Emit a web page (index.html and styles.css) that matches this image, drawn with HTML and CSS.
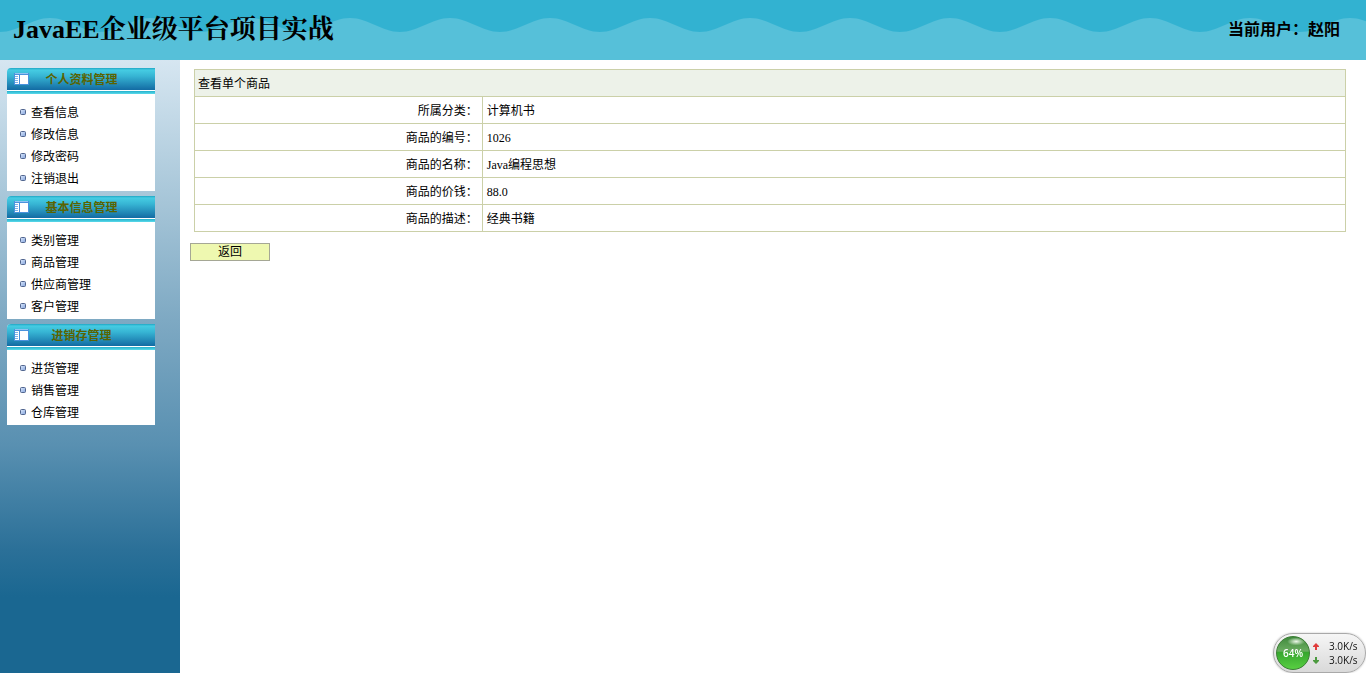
FILE: index.html
```html
<!DOCTYPE html>
<html lang="zh-CN">
<head>
<meta charset="utf-8">
<title>JavaEE企业级平台项目实战</title>
<link rel="stylesheet" href="styles.css">
</head>
<body>
<svg class="defs" width="0" height="0" aria-hidden="true">
  <defs>
    <linearGradient id="bullet-fill" x1="0" y1="0" x2="1" y2="1">
      <stop offset="0" stop-color="#dbe8fb"/><stop offset="1" stop-color="#86a5dd"/>
    </linearGradient>
    <symbol id="panel-icon" viewBox="0 0 15 12">
      <path fill="#4a92dc" d="M0 0h15v12H0z"/>
      <path fill="#fff" d="M1 2h4v9H1zM6 2h8v9H6z"/>
      <path fill="#7fb2e8" d="M1 3h3v1H1zM1 5h3v1H1zM1 7h3v1H1zM1 9h3v1H1z"/>
      <path fill="#8fc3f2" d="M1 0h13v1H1z"/>
    </symbol>
    <symbol id="bullet" viewBox="0 0 6 6">
      <rect x="0.5" y="0.5" width="5" height="5" rx="1" fill="url(#bullet-fill)" stroke="#52668f"/>
    </symbol>
  </defs>
</svg>
<header class="header">
  <svg class="wave" aria-hidden="true">
    <defs>
      <pattern id="wave-pattern" x="50" width="100" height="60" patternUnits="userSpaceOnUse">
        <path fill="#56c0d9" d="M0 18C18 18 32 32 50 32S82 18 100 18V60H0z"/>
      </pattern>
    </defs>
    <rect width="100%" height="100%" fill="url(#wave-pattern)"/>
  </svg>
  <h1 class="title">JavaEE企业级平台项目实战</h1>
  <p class="user">当前用户：赵阳</p>
</header>
<div class="body">
  <nav class="sidebar">
    <section class="panel">
      <h2 class="panel-head"><svg class="panel-icon"><use href="#panel-icon"/></svg><span class="panel-title">个人资料管理</span></h2>
      <ul class="menu">
        <li><svg class="bullet"><use href="#bullet"/></svg><a href="#">查看信息</a></li>
        <li><svg class="bullet"><use href="#bullet"/></svg><a href="#">修改信息</a></li>
        <li><svg class="bullet"><use href="#bullet"/></svg><a href="#">修改密码</a></li>
        <li><svg class="bullet"><use href="#bullet"/></svg><a href="#">注销退出</a></li>
      </ul>
    </section>
    <section class="panel">
      <h2 class="panel-head"><svg class="panel-icon"><use href="#panel-icon"/></svg><span class="panel-title">基本信息管理</span></h2>
      <ul class="menu">
        <li><svg class="bullet"><use href="#bullet"/></svg><a href="#">类别管理</a></li>
        <li><svg class="bullet"><use href="#bullet"/></svg><a href="#">商品管理</a></li>
        <li><svg class="bullet"><use href="#bullet"/></svg><a href="#">供应商管理</a></li>
        <li><svg class="bullet"><use href="#bullet"/></svg><a href="#">客户管理</a></li>
      </ul>
    </section>
    <section class="panel">
      <h2 class="panel-head"><svg class="panel-icon"><use href="#panel-icon"/></svg><span class="panel-title">进销存管理</span></h2>
      <ul class="menu">
        <li><svg class="bullet"><use href="#bullet"/></svg><a href="#">进货管理</a></li>
        <li><svg class="bullet"><use href="#bullet"/></svg><a href="#">销售管理</a></li>
        <li><svg class="bullet"><use href="#bullet"/></svg><a href="#">仓库管理</a></li>
      </ul>
    </section>
  </nav>
  <main class="content">
    <table class="detail">
      <colgroup><col class="label-col"><col></colgroup>
      <thead><tr><th class="caption" colspan="2">查看单个商品</th></tr></thead>
      <tbody>
        <tr><th scope="row">所属分类：</th><td>计算机书</td></tr>
        <tr><th scope="row">商品的编号：</th><td>1026</td></tr>
        <tr><th scope="row">商品的名称：</th><td>Java编程思想</td></tr>
        <tr><th scope="row">商品的价钱：</th><td>88.0</td></tr>
        <tr><th scope="row">商品的描述：</th><td>经典书籍</td></tr>
      </tbody>
    </table>
    <button class="back" type="button">返回</button>
  </main>
</div>
<aside class="meter">
  <span class="ball">64%</span>
  <div class="rates">
    <span class="rate"><svg class="arrow up" viewBox="0 0 6 7"><path d="M3 0l3 3v1H4v3H2V4H0V3z"/></svg>3.0K/s</span>
    <span class="rate"><svg class="arrow down" viewBox="0 0 6 7"><path d="M3 7L0 4V3h2V0h2v3h2v1z"/></svg>3.0K/s</span>
  </div>
</aside>
</body>
</html>
```
FILE: styles.css
```css
* {
  box-sizing: border-box;
}

body {
  margin: 0;
  min-height: 100vh;
  display: flex;
  flex-direction: column;
  background: #fff;
  color: #000;
  font: 12px/22px "Liberation Serif", "Noto Sans CJK SC", serif;
}

.defs {
  position: absolute;
}

.header {
  position: relative;
  display: flex;
  align-items: center;
  justify-content: space-between;
  height: 60px;
  padding: 0 26px 0 13px;
  background: #32b2d1;
}

.wave {
  position: absolute;
  inset: 0;
  width: 100%;
  height: 100%;
}

.title,
.user {
  position: relative;
  margin: 0;
  font-weight: bold;
  white-space: nowrap;
}

.title {
  font-family: "Liberation Serif", "Noto Serif CJK SC", "Noto Sans CJK SC", serif;
  font-size: 26px;
  line-height: 60px;
}

.user {
  font-size: 16px;
  line-height: 60px;
}

.body {
  flex: 1;
  display: flex;
}

.sidebar {
  flex: none;
  display: flex;
  flex-direction: column;
  gap: 5px;
  width: 180px;
  padding: 8px 25px 8px 7px;
  background: #1a6791 linear-gradient(#d6e6f1 0, #aac8da 130px, #7ea9c3 260px, #5990b1 385px, #2b7098 490px, #1a6791 537px) no-repeat;
}

.panel {
  background: #fff;
  border-radius: 4px 0 0 0;
}

.panel-head {
  display: flex;
  align-items: flex-start;
  height: 26px;
  margin: 0;
  padding: 1px 7px 0;
  border-radius: 4px 0 0 0;
  background: linear-gradient(#1fa6c4 0, #45cce3 2px, #37b5d4 8px, #136ba3 22px, #fff 22px, #fff 23px, #22b0cc 23px, #5cdaea 26px);
  font-size: 12px;
  line-height: 22px;
}

.panel-icon {
  width: 15px;
  height: 12px;
  margin-top: 4px;
}

.panel-title {
  flex: 1;
  padding-right: 14px;
  color: #5a6300;
  text-align: center;
}

.menu {
  margin: 0;
  padding: 7px 13px 2px;
  list-style: none;
}

.menu li {
  display: flex;
  align-items: center;
  gap: 5px;
  height: 22px;
}

.menu a {
  padding-top: 2px;
  color: #000;
  text-decoration: none;
}

.bullet {
  width: 6px;
  height: 6px;
}

.content {
  flex: 1;
  padding: 9px 20px 9px 10px;
}

.detail {
  width: calc(100% - 4px);
  margin: 0 0 11px 4px;
  border-collapse: collapse;
  table-layout: fixed;
}

.label-col {
  width: 25%;
}

.detail th,
.detail td {
  height: 27px;
  padding: 2px 4px 0;
  border: 1px solid #cbd0a8;
  line-height: 22px;
  text-align: left;
  font-weight: normal;
}

.detail tbody th {
  text-align: right;
}

.detail .caption {
  padding: 2px 3px 0;
  background: #edf2e9;
}

.back {
  display: block;
  width: 80px;
  height: 18px;
  padding: 0;
  border: 1px solid #a5a795;
  background: #eef8b0;
  color: #000;
  font: inherit;
  line-height: 16px;
}

.meter {
  position: fixed;
  right: 0;
  bottom: 0;
  display: flex;
  align-items: center;
  gap: 3px;
  width: 93px;
  height: 40px;
  padding: 0 2px;
  border: 1px solid #a9a9a9;
  border-radius: 20px;
  background: linear-gradient(#f6f6f6, #d9d9d9);
  box-shadow: 0 0 2px #bbb;
  color: #111;
  font: 10px/14px "Open Sans", sans-serif;
}

.ball {
  width: 34px;
  height: 34px;
  border: 1px solid #3b7d35;
  border-radius: 50%;
  background: radial-gradient(ellipse 9px 4px at 60% 14%, #eef8ea 0, transparent 100%), linear-gradient(#3f8a3c 0, #6cae62 45%, #35a52d 46%, #58cf42 100%);
  color: #fff;
  font-weight: 600;
  line-height: 32px;
  text-align: center;
}

.rates {
  display: flex;
  flex-direction: column;
}

.rate {
  display: flex;
  align-items: center;
  gap: 10px;
}

.arrow {
  width: 6px;
  height: 7px;
}

.up {
  fill: #e03c3c;
}

.down {
  fill: #4c9a3f;
}
```
